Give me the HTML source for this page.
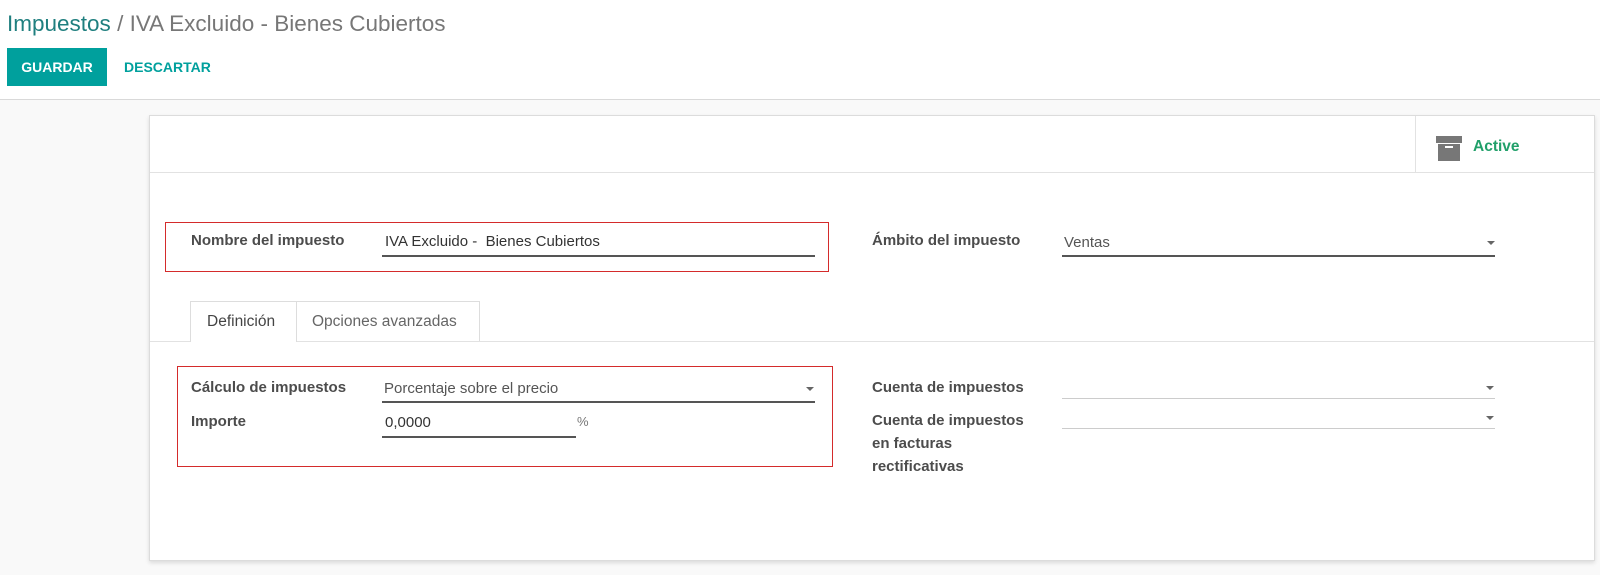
<!DOCTYPE html>
<html><head><meta charset="utf-8"><style>
*{margin:0;padding:0;box-sizing:border-box}
body{width:1600px;height:575px;overflow:hidden;background:#f9f9f9;font-family:"Liberation Sans",sans-serif;position:relative;color:#4c4c4c}
.top{position:absolute;left:0;top:0;width:1600px;height:100px;background:#fff;border-bottom:1px solid #d9d9d9}
.a{position:absolute;white-space:nowrap}
.card{position:absolute;left:149px;top:115px;width:1446px;height:446px;background:#fff;border:1px solid #dcdcdc;box-shadow:0 2px 4px rgba(0,0,0,.12)}
.lbl{font-weight:bold;font-size:15px;color:#4c4c4c}
.val{font-size:15px;color:#333}
.ul{position:absolute;height:2px;background:#555}
.ull{position:absolute;height:1px;background:#ccc}
.red{position:absolute;border:1.5px solid #d42b2b}
.caret{position:absolute;width:0;height:0;border-left:4px solid transparent;border-right:4px solid transparent;border-top:4px solid #666}
</style></head><body>
<div class="top">
<div class="a" style="left:7px;top:11px;font-size:22.5px;color:#777"><span style="color:#1f7f7f">Impuestos</span> / IVA Excluido - Bienes Cubiertos</div>
<div class="a" style="left:7px;top:48px;width:100px;height:38px;background:#00a09d;color:#fff;font-weight:bold;font-size:14px;line-height:38px;text-align:center">GUARDAR</div>
<div class="a" style="left:124px;top:48px;height:38px;line-height:38px;color:#00a09d;font-weight:bold;font-size:14px">DESCARTAR</div>
</div>
<div class="card">
<div class="a" style="left:0;top:56px;width:1444px;height:1px;background:#e2e2e2"></div>
<div class="a" style="left:1265px;top:0;width:1px;height:56px;background:#e2e2e2"></div>
<div class="a" style="left:1286px;top:20px;width:26px;height:7px;background:#777"></div>
<div class="a" style="left:1288px;top:28px;width:22px;height:17px;background:#777"></div>
<div class="a" style="left:1295px;top:30px;width:8px;height:2px;background:#fff"></div>
<div class="a" style="left:1323px;top:22px;font-size:15.5px;font-weight:bold;color:#21a06a">Active</div>
<div class="a" style="left:0;top:225px;width:1444px;height:1px;background:#e2e2e2"></div>
<div class="a" style="left:40px;top:185px;width:107px;height:41px;background:#fff;border:1px solid #ddd;border-bottom:none"></div>
<div class="a" style="left:146px;top:185px;width:184px;height:40px;border:1px solid #ddd;border-left:none;border-bottom:none"></div>
<div class="a val" style="left:57px;top:197px;color:#444;font-size:15.5px">Definición</div>
<div class="a val" style="left:162px;top:197px;color:#666;font-size:15.5px">Opciones avanzadas</div>
</div>
<div class="red" style="left:165px;top:222px;width:664px;height:50px"></div>
<div class="red" style="left:177px;top:366px;width:656px;height:101px"></div>
<div class="a lbl" style="left:191px;top:232px">Nombre del impuesto</div>
<div class="a val" style="left:385px;top:233px">IVA Excluido -&nbsp; Bienes Cubiertos</div>
<div class="ul" style="left:382px;top:255px;width:433px"></div>
<div class="a lbl" style="left:872px;top:232px">Ámbito del impuesto</div>
<div class="a val" style="left:1064px;top:234px;color:#555">Ventas</div>
<div class="ul" style="left:1062px;top:255px;width:433px"></div>
<div class="caret" style="left:1487px;top:241px"></div>
<div class="a lbl" style="left:191px;top:379px">Cálculo de impuestos</div>
<div class="a val" style="left:384px;top:380px;color:#555">Porcentaje sobre el precio</div>
<div class="ul" style="left:382px;top:401px;width:433px"></div>
<div class="caret" style="left:806px;top:387px"></div>
<div class="a lbl" style="left:191px;top:413px">Importe</div>
<div class="a val" style="left:385px;top:414px">0,0000</div>
<div class="a" style="left:577px;top:414px;font-size:13px;color:#777">%</div>
<div class="ul" style="left:382px;top:436px;width:194px"></div>
<div class="a lbl" style="left:872px;top:379px">Cuenta de impuestos</div>
<div class="ull" style="left:1062px;top:398px;width:433px"></div>
<div class="caret" style="left:1486px;top:386px"></div>
<div class="a lbl" style="left:872px;top:409px;line-height:23px">Cuenta de impuestos<br>en facturas<br>rectificativas</div>
<div class="ull" style="left:1062px;top:428px;width:433px"></div>
<div class="caret" style="left:1486px;top:416px"></div>
</body></html>
